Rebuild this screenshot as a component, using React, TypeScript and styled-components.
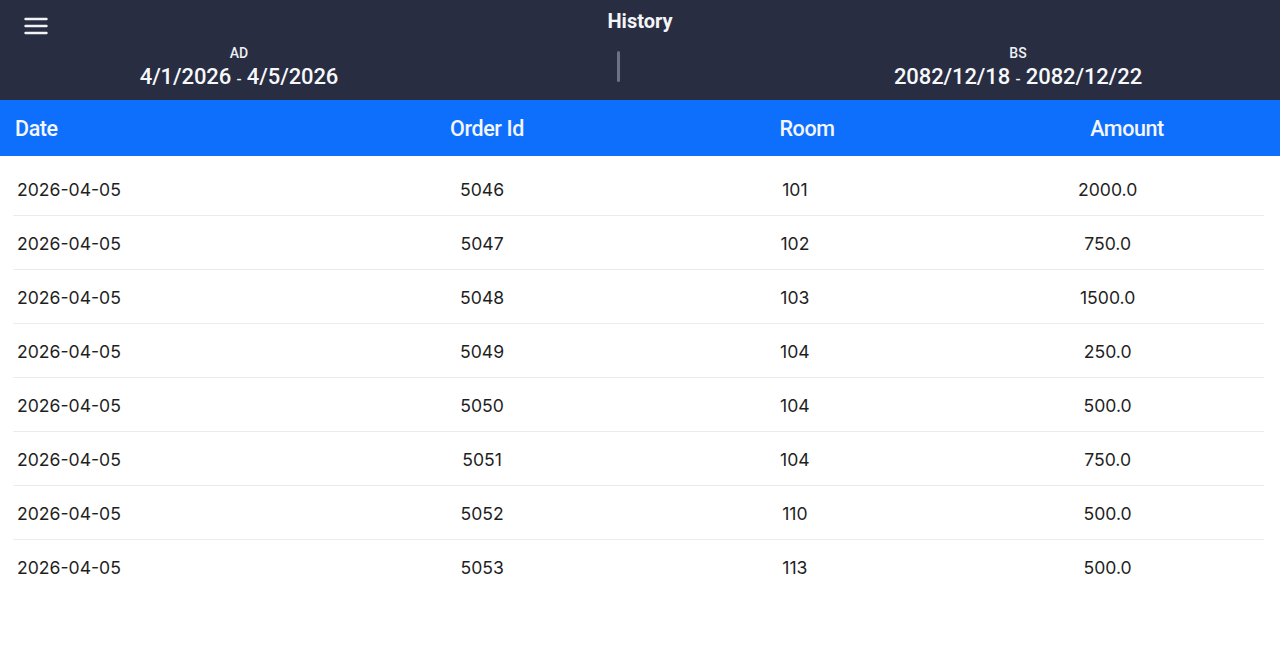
import styled, { createGlobalStyle } from 'styled-components';

const GlobalStyle = createGlobalStyle`
  html, body {
    margin: 0;
    padding: 0;
    background: #ffffff;
    font-family: Inter, 'Noto Sans', sans-serif;
    overflow: hidden;
  }
  * {
    box-sizing: border-box;
  }
`;

const orders = [
  { date: '2026-04-05', id: 5046, room: 101, amount: '2000.0' },
  { date: '2026-04-05', id: 5047, room: 102, amount: '750.0' },
  { date: '2026-04-05', id: 5048, room: 103, amount: '1500.0' },
  { date: '2026-04-05', id: 5049, room: 104, amount: '250.0' },
  { date: '2026-04-05', id: 5050, room: 104, amount: '500.0' },
  { date: '2026-04-05', id: 5051, room: 104, amount: '750.0' },
  { date: '2026-04-05', id: 5052, room: 110, amount: '500.0' },
  { date: '2026-04-05', id: 5053, room: 113, amount: '500.0' },
];

const MenuIcon = () => (
  <svg width="24" height="18" viewBox="0 0 24 18">
    <g stroke="#f2f3f7" strokeWidth="2.4" strokeLinecap="round">
      <line x1="1.5" y1="2" x2="22.5" y2="2" />
      <line x1="1.5" y1="9" x2="22.5" y2="9" />
      <line x1="1.5" y1="16" x2="22.5" y2="16" />
    </g>
  </svg>
);

export default function App() {
  return (
    <Page>
      <GlobalStyle />
      <TopBar>
        <TitleRow>
          <MenuButton>
            <MenuIcon />
          </MenuButton>
          <Title>History</Title>
        </TitleRow>
        <RangeRow>
          <RangeBlock>
            <RangeLabel>AD</RangeLabel>
            <RangeText>
              4/1/2026 <Dash>-</Dash> 4/5/2026
            </RangeText>
          </RangeBlock>
          <Divider />
          <RangeBlock>
            <RangeLabel>BS</RangeLabel>
            <RangeText>
              2082/12/18 <Dash>-</Dash> 2082/12/22
            </RangeText>
          </RangeBlock>
        </RangeRow>
      </TopBar>

      <HeadRow>
        <HeadCell>Date</HeadCell>
        <HeadCell $center>Order Id</HeadCell>
        <HeadCell $center>Room</HeadCell>
        <HeadCell $center $shift={7}>Amount</HeadCell>
      </HeadRow>

      <List>
        {orders.map((o) => (
          <Row key={o.id}>
            <Cell>{o.date}</Cell>
            <Cell $center>{o.id}</Cell>
            <Cell $center>{o.room}</Cell>
            <Cell $center>{o.amount}</Cell>
          </Row>
        ))}
      </List>
    </Page>
  );
}

const Page = styled.div`
  width: 1280px;
  height: 671px;
  display: flex;
  flex-flow: column;
  background: #ffffff;
`;

const TopBar = styled.header`
  height: 100px;
  background: #282d42;
  color: #ffffff;
  display: flex;
  flex-flow: column;
`;

const TitleRow = styled.div`
  position: relative;
  height: 44px;
  display: flex;
  justify-content: center;
  align-items: flex-start;
  padding-top: 8px;
`;

const MenuButton = styled.div`
  position: absolute;
  left: 24px;
  top: 17px;
  display: flex;
`;

const Title = styled.h1`
  margin: 0;
  font-family: Roboto, 'Noto Sans', sans-serif;
  font-size: 20px;
  font-weight: 700;
  line-height: 26px;
  color: #f4f5f8;
`;

const RangeRow = styled.div`
  display: grid;
  grid-template-columns: 478px 1fr 524px;
  align-items: center;
`;

const RangeBlock = styled.div`
  display: flex;
  flex-flow: column;
  align-items: center;
`;

const RangeLabel = styled.span`
  font-family: Roboto, 'Noto Sans', sans-serif;
  font-size: 14px;
  font-weight: 500;
  line-height: 18px;
  color: #eef0f4;
`;

const RangeText = styled.span`
  font-family: Roboto, 'Noto Sans', sans-serif;
  font-size: 22px;
  font-weight: 500;
  line-height: 30px;
  color: #f7f8fa;
  white-space: nowrap;
  letter-spacing: -0.1px;
`;

const Dash = styled.span`
  font-size: 15px;
`;

const Divider = styled.div`
  justify-self: center;
  width: 3px;
  height: 31px;
  margin-left: 3px;
  margin-bottom: 6px;
  border-radius: 2px;
  background: #6d7183;
`;

const HeadRow = styled.div`
  height: 56px;
  background: #0f6ffd;
  display: grid;
  grid-template-columns: 327px 320px 320px 313px;
  align-items: center;
`;

const HeadCell = styled.div<{ $center?: boolean; $shift?: number }>`
  font-family: Roboto, 'Noto Sans', sans-serif;
  font-size: 21.5px;
  font-weight: 500;
  color: #f3f6fd;
  text-align: ${(p) => (p.$center ? 'center' : 'left')};
  padding-left: ${(p) => (p.$center ? `${p.$shift || 0}px` : '15px')};
  letter-spacing: -0.4px;
`;

const List = styled.div`
  display: flex;
  flex-flow: column;
  padding: 6px 16px 0 13px;
`;

const Row = styled.div`
  height: 54px;
  display: grid;
  grid-template-columns: repeat(4, 1fr);
  align-items: center;
  border-bottom: 1px solid #ececec;

  &:last-child {
    border-bottom: none;
  }
`;

const Cell = styled.div<{ $center?: boolean }>`
  font-family: Inter, 'Noto Sans', sans-serif;
  font-size: 17.6px;
  font-weight: 400;
  color: #1f1f1f;
  text-align: ${(p) => (p.$center ? 'center' : 'left')};
  padding-left: ${(p) => (p.$center ? '0' : '4px')};
  padding-top: 1px;
`;
